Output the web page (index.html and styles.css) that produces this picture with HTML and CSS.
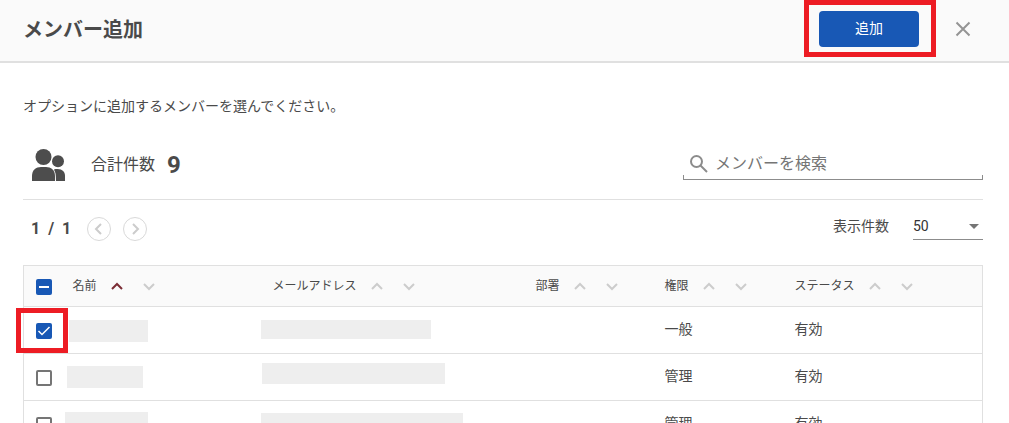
FILE: index.html
```
<!DOCTYPE html>
<html lang="ja">
<head>
	<title>メンバー追加</title>
	<meta charset="utf-8">
	<meta name="viewport" content="width=device-width,initial-scale=1">
	<link rel="stylesheet" href="styles.css">
</head>
<body>
	<svg class="defs" width="0" height="0">
		<symbol id="up" viewBox="0 0 16 16"><path d="M3 11l5-5 5 5" fill="none" stroke="currentColor" stroke-width="2"/></symbol>
		<symbol id="down" viewBox="0 0 16 16"><path d="M3 6l5 5 5-5" fill="none" stroke="currentColor" stroke-width="2"/></symbol>
	</svg>
	<div class="modal">
		<header class="modal-head">
			<h1>メンバー追加</h1>
			<div class="mark"><button type="button" class="btn-add">追加</button></div>
			<button type="button" class="btn-close" aria-label="閉じる">
				<svg width="16" height="16" viewBox="0 0 16 16"><path d="M1.5 1.5l13 13M14.5 1.5l-13 13" fill="none" stroke="#949494" stroke-width="2"/></svg>
			</button>
		</header>
		<main class="modal-body">
			<p class="lead">オプションに追加するメンバーを選んでください。</p>

			<!-- 件数・検索 -->
			<div class="summary">
				<svg class="people" width="34" height="32" viewBox="0 0 34 32" fill="#4d4d4d">
					<circle cx="26" cy="12.2" r="6"/>
					<path d="M22 20.6c1-.5 2-.6 3.500-.6 5 0 7.500 3 7.500 7v5h-9z"/>
					<path d="M0 32v-5c0-6 4-9 9-9h5c5 0 9 3 9 9v5z" stroke="#fff" stroke-width="1.500" paint-order="stroke"/>
					<circle cx="11.500" cy="8" r="8" stroke="#fff" stroke-width="1.500" paint-order="stroke"/>
				</svg>
				<span class="total">合計件数</span>
				<strong class="count">9</strong>
				<label class="search">
					<svg width="18" height="18" viewBox="0 0 18 18" fill="none" stroke="#8c8c8c" stroke-width="2"><circle cx="6.500" cy="6.500" r="5.500"/><path d="M10.500 10.500l6.500 6.500"/></svg>
					<input type="text" placeholder="メンバーを検索" aria-label="メンバーを検索">
				</label>
			</div>

			<!-- ページ送り -->
			<div class="pager">
				<span class="page">1 / 1</span>
				<button type="button" class="btn-page" aria-label="前へ"><svg width="22" height="22" viewBox="0 0 22 22"><path d="M13 6l-5 5 5 5" fill="none" stroke="currentColor" stroke-width="2"/></svg></button>
				<button type="button" class="btn-page" aria-label="次へ"><svg width="22" height="22" viewBox="0 0 22 22"><path d="M9 6l5 5-5 5" fill="none" stroke="currentColor" stroke-width="2"/></svg></button>
				<div class="limit">
					<label for="limit">表示件数</label>
					<div class="select">
						<select id="limit"><option>50</option><option>100</option></select>
						<svg width="10" height="5" viewBox="0 0 10 5"><path d="M0 0h10L5 5z" fill="#757575"/></svg>
					</div>
				</div>
			</div>

			<table class="members">
				<colgroup><col class="c-check"><col class="c-name"><col class="c-mail"><col class="c-dept"><col class="c-role"><col></colgroup>
				<thead>
					<tr>
						<th class="tick"><input type="checkbox" class="check some" aria-label="すべて選択"></th>
						<th><div class="sort">名前<button type="button" class="on" aria-label="名前 昇順"><svg><use href="#up"/></svg></button><button type="button" aria-label="名前 降順"><svg><use href="#down"/></svg></button></div></th>
						<th><div class="sort">メールアドレス<button type="button" aria-label="メールアドレス 昇順"><svg><use href="#up"/></svg></button><button type="button" aria-label="メールアドレス 降順"><svg><use href="#down"/></svg></button></div></th>
						<th><div class="sort">部署<button type="button" aria-label="部署 昇順"><svg><use href="#up"/></svg></button><button type="button" aria-label="部署 降順"><svg><use href="#down"/></svg></button></div></th>
						<th><div class="sort">権限<button type="button" aria-label="権限 昇順"><svg><use href="#up"/></svg></button><button type="button" aria-label="権限 降順"><svg><use href="#down"/></svg></button></div></th>
						<th><div class="sort">ステータス<button type="button" aria-label="ステータス 昇順"><svg><use href="#up"/></svg></button><button type="button" aria-label="ステータス 降順"><svg><use href="#down"/></svg></button></div></th>
					</tr>
				</thead>
				<tbody>
					<tr>
						<td class="tick"><span class="pick"><input type="checkbox" class="check" aria-label="メンバー1" checked></span></td>
						<td class="hid"><div class="mask name1"></div></td>
						<td class="hid"><div class="mask mail1"></div></td>
						<td></td>
						<td>一般</td>
						<td>有効</td>
					</tr>
					<tr>
						<td class="tick"><input type="checkbox" class="check" aria-label="メンバー2"></td>
						<td class="hid"><div class="mask name2"></div></td>
						<td class="hid"><div class="mask mail2"></div></td>
						<td></td>
						<td>管理</td>
						<td>有効</td>
					</tr>
					<tr>
						<td class="tick"><input type="checkbox" class="check" aria-label="メンバー3"></td>
						<td class="hid"><div class="mask name3"></div></td>
						<td class="hid"><div class="mask mail3"></div></td>
						<td></td>
						<td>管理</td>
						<td>有効</td>
					</tr>
				</tbody>
			</table>
		</main>
	</div>
</body>
</html>
```
FILE: styles.css
```
*,*::after{margin: 0;padding: 0;box-sizing: border-box;}
html,body{height: 100%;}
body{font-family: Roboto,"Noto Sans CJK JP",sans-serif;font-size: 14px;line-height: 20px;color: #4a4a4a;background-color: #fff;}
button{border: 0;background: none;font: inherit;cursor: pointer;}
svg{display: block;}
.defs{position: absolute;}
.modal{height: 100%;overflow: hidden;}

.modal-head{display: flex;align-items: flex-start;padding-right: 38px;height: 63px;background-color: #fafafa;border-bottom: 2px solid #e0e0e0;}
.modal-head h1{flex: 1;padding: 18px 0 0 23px;font-size: 20px;line-height: 24px;font-weight: bold;}
.mark{padding: 6px 12px 5px 10px;border: 5px solid #ed1c24;}
.btn-add{display: block;width: 100px;height: 36px;padding-bottom: 2px;border-radius: 4px;background-color: #1858b5;color: #fff;}
.btn-close{margin: 21px 0 0 19px;}

.modal-body{padding: 33px 26px 0 23px;}
.summary{display: flex;align-items: center;height: 84px;padding: 14px 0 0 9px;border-bottom: 1px solid #e0e0e0;}
.total{margin: 0 12px 0 25px;font-size: 16px;}
.count{font-size: 24px;}
.search{display: flex;align-items: center;width: 300px;height: 31px;margin-left: auto;padding-left: 7px;border-bottom: 1px solid #8c8c8c;
	background: linear-gradient(#8c8c8c,#8c8c8c) left bottom/1px 4px no-repeat,linear-gradient(#8c8c8c,#8c8c8c) right bottom/1px 4px no-repeat;}
.search input{flex: 1;min-width: 0;margin-left: 7px;border: 0;background: none;font: inherit;font-size: 16px;outline: none;}
.search input::placeholder{color: #757575;}

.pager{display: flex;align-items: center;height: 65px;padding: 0 0 7px 8px;}
.page{margin-right: 16px;font-size: 16px;font-weight: bold;word-spacing: 4px;}
.btn-page{width: 24px;height: 24px;margin-right: 12px;border: 1px solid #d9d9d9;border-radius: 50%;color: #ccc;}
.limit{display: flex;align-items: center;margin: 0 0 6px auto;}
.select{position: relative;width: 70px;margin-left: 24px;}
.select select{width: 100%;height: 28px;border: 0;border-bottom: 1px solid #8c8c8c;background: none;appearance: none;font: inherit;color: #333;}
.select svg{position: absolute;right: 4px;top: 12px;pointer-events: none;}

.members{width: 100%;table-layout: fixed;border-collapse: collapse;border: 1px solid #e0e0e0;}
.c-check{width: 37px;}
.c-name{width: 200px;}
.c-mail{width: 263px;}
.c-dept{width: 129px;}
.c-role{width: 130px;}
.members th{height: 41px;padding-left: 12px;background-color: #fafafa;font-size: 12px;font-weight: normal;text-align: left;}
.members td{height: 47px;padding: 0 0 2px 12px;border-top: 1px solid #e0e0e0;}
.members .tick{padding: 2px 0 0 12px;}
.members .hid{padding: 0;vertical-align: top;}
.sort{display: flex;align-items: center;}
.sort button{margin-left: 16px;color: #ccc;}
.sort button:first-of-type{margin-left: 12px;}
.sort .on{color: #7b2d35;}
.sort svg{width: 16px;height: 16px;}

.check{display: block;width: 16px;height: 16px;border: 2px solid #757575;border-radius: 2px;appearance: none;background-color: #fff;}
.check:checked,.some{border: 0;background: #1858b5 center no-repeat;}
.check:checked{background-image: url("data:image/svg+xml,%3Csvg xmlns='http://www.w3.org/2000/svg' width='16' height='16'%3E%3Cpath d='M2.500 8l3.500 3.500L13.500 4' fill='none' stroke='white' stroke-width='1.500'/%3E%3C/svg%3E");}
.some{background-image: linear-gradient(#fff,#fff);background-size: 10px 2px;}
.pick{position: relative;display: block;width: 16px;}
.pick::after{content: "";position: absolute;left: -20px;top: -15px;width: 52px;height: 45px;border: 5px solid #ed1c24;pointer-events: none;}

.mask{height: 22px;background-color: #eee;}
.name1{width: 79px;margin: 13px 0 0 8px;}
.name2{width: 76px;margin: 12px 0 0 6px;}
.name3{width: 83px;margin: 11px 0 0 4px;}
.mail1{width: 170px;height: 19px;margin-top: 13px;}
.mail2{width: 183px;height: 21px;margin: 9px 0 0 1px;}
.mail3{width: 202px;margin-top: 12px;}
```
